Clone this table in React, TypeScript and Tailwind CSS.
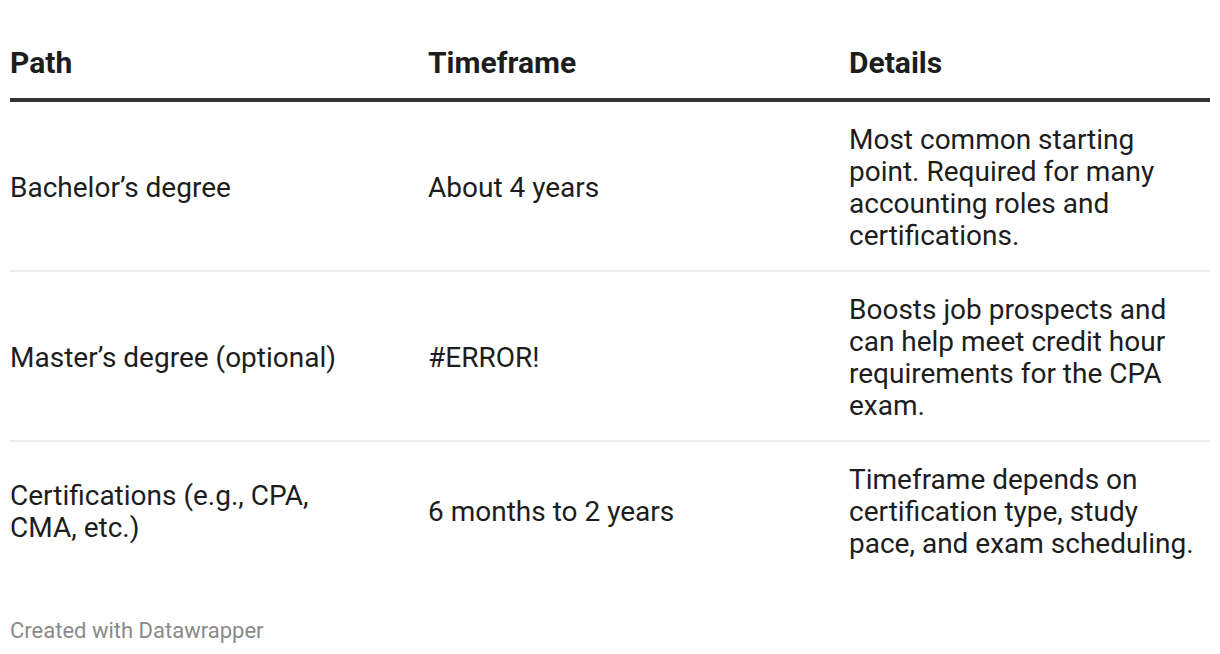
const rows = [
  {
    path: 'Bachelor’s degree',
    time: 'About 4 years',
    details: 'Most common starting point. Required for many accounting roles and certifications.',
  },
  {
    path: 'Master’s degree (optional)',
    time: '#ERROR!',
    details: 'Boosts job prospects and can help meet credit hour requirements for the CPA exam.',
  },
  {
    path: 'Certifications (e.g., CPA, CMA, etc.)',
    time: '6 months to 2 years',
    details: 'Timeframe depends on certification type, study pace, and exam scheduling.',
  },
];

export default function App() {
  return (
    <div
      className="w-[1220px] h-[654px] bg-white px-[10px] text-[#1d1d1d] overflow-hidden"
      style={{ fontFamily: 'Roboto, "Liberation Sans", sans-serif' }}
    >
      {/* Header */}
      <div className="grid grid-cols-[418px_421px_1fr] border-b-4 border-[#333333] pt-[46px] pb-[18px] text-[30px] leading-[34px] font-bold">
        <div>Path</div>
        <div>Timeframe</div>
        <div>Details</div>
      </div>

      {/* Body */}
      {rows.map((r, i) => (
        <div
          key={i}
          className={`grid grid-cols-[418px_421px_1fr] items-center pt-[22px] pb-[18px] text-[28px] leading-[32px] ${
            i < rows.length - 1 ? 'border-b-2 border-[#ececec]' : ''
          }`}
        >
          <div className="pr-[60px]">{r.path}</div>
          <div className="pr-[20px]">{r.time}</div>
          <div className="pr-[10px]">{r.details}</div>
        </div>
      ))}

      {/* Footer */}
      <div className="mt-[40px] text-[22px] leading-[26px] text-[#8a8a8a]">Created with Datawrapper</div>
    </div>
  );
}
